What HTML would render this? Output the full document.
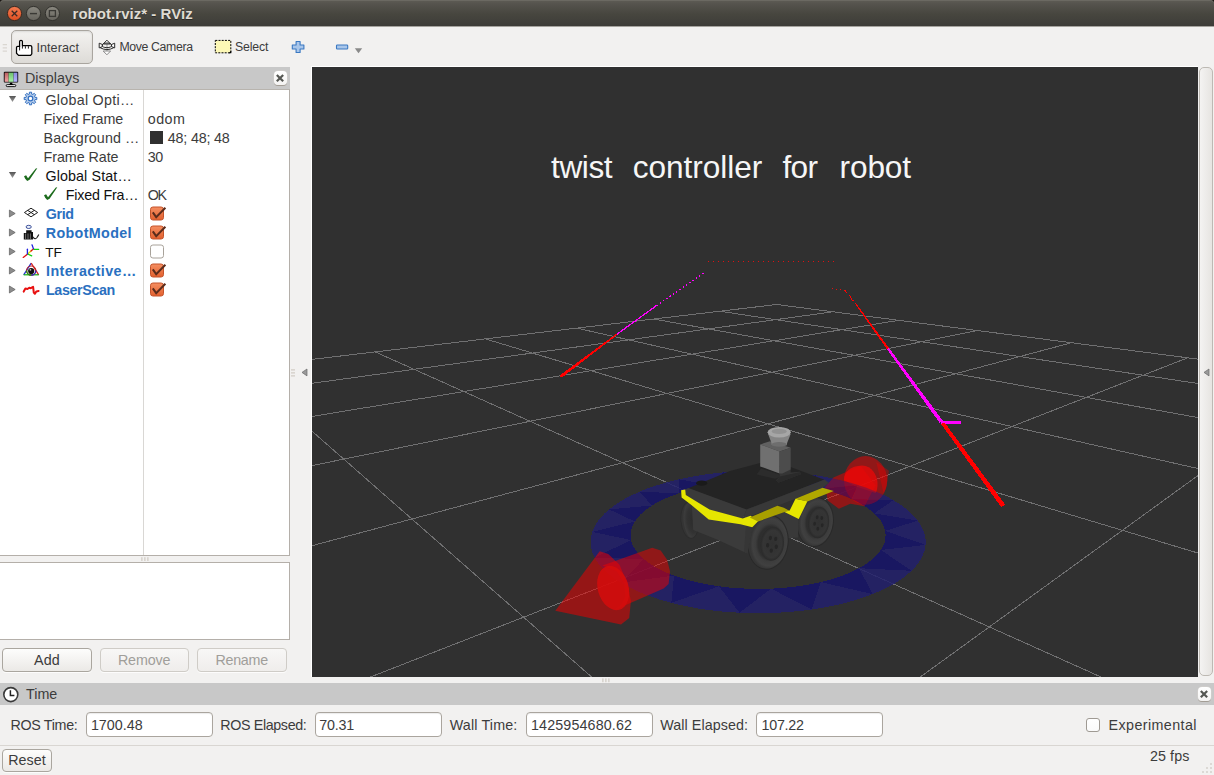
<!DOCTYPE html>
<html>
<head>
<meta charset="utf-8">
<title>robot.rviz* - RViz</title>
<style>
html,body{margin:0;padding:0;}
body{width:1214px;height:775px;overflow:hidden;background:#f2f1f0;position:relative;
  font-family:"Liberation Sans","DejaVu Sans",sans-serif;font-size:14px;color:#3c3c3c;}
.abs{position:absolute;}
#titlebar{left:0;top:0;width:1214px;height:26px;border-radius:4px 4px 0 0;
  background:linear-gradient(#5e5c55 0px,#55534d 4px,#47463f 14px,#3d3c38 26px);box-shadow:inset 0 1px 0 #6b6962;}
.hdr{background:#c8c8c8;}
.closebtn{width:13px;height:14px;background:linear-gradient(#ffffff,#f4f3f2);border-radius:4px;box-shadow:0 1px 0 #a39d95, 0 0 0 0.5px #d5d2ce;}
.panel{background:#fff;border:1px solid #b4afa9;box-sizing:border-box;}
.btn{box-sizing:border-box;border:1px solid #aaa69f;border-radius:4px;background:linear-gradient(#fdfdfc,#ebe9e6);height:24px;box-shadow:0 1px 0 rgba(255,255,255,.8);}
.btn.dis{border-color:#cfccc7;background:linear-gradient(#f8f7f6,#efedeb);}
.inp{box-sizing:border-box;border:1px solid #aaa59e;border-radius:4px;background:#fff;height:25px;box-shadow:inset 0 1px 1px rgba(0,0,0,.08);}
</style>
</head>
<body>
<!-- TITLE BAR -->
<div class="abs" style="left:0;top:0;width:1214px;height:8px;background:#1a1614;"></div>
<div id="titlebar" class="abs"></div>
<div class="abs" style="left:0;top:26px;width:1214px;height:1px;background:#a5a39e;"></div>

<!-- TOOLBAR -->
<div class="abs" style="left:11px;top:30px;width:82px;height:34px;box-sizing:border-box;border:1px solid #a9a59f;border-radius:5px;background:linear-gradient(#f3f2f0,#e9e7e4 50%,#dddbd7);box-shadow:inset 0 1px 2px rgba(0,0,0,.10);"></div>

<!-- DISPLAYS PANEL -->
<div class="abs hdr" style="left:0;top:67px;width:290px;height:23px;"></div>
<div class="abs closebtn" style="left:273.5px;top:71px;"></div>
<div class="abs panel" style="left:-1px;top:89px;width:291px;height:467px;border-top-color:#b8b4ae;"></div>
<div class="abs" style="left:143px;top:90px;width:1px;height:465px;background:#d9d7d4;"></div>
<div class="abs panel" style="left:-1px;top:562px;width:291px;height:78px;"></div>

<div class="abs btn" style="left:2px;top:648px;width:90px;"></div>
<div class="abs btn dis" style="left:100px;top:648px;width:89px;"></div>
<div class="abs btn dis" style="left:197px;top:648px;width:90px;"></div>

<!-- 3D VIEW -->
<div class="abs" style="left:311px;top:66px;width:887px;height:1px;background:#fff;"></div>
<div class="abs" style="left:311px;top:66px;width:1px;height:611px;background:#fff;"></div>
<div class="abs" id="view" style="left:312px;top:67px;width:886px;height:610px;background:#303030;overflow:hidden;">
<svg class="abs" style="left:0;top:0" width="886" height="610" viewBox="312 67 886 610">
<g stroke="#707071" stroke-width="1" fill="none" shape-rendering="crispEdges">
<line x1="776.7" y1="304.5" x2="-867.1" y2="498.6"/>
<line x1="776.7" y1="304.5" x2="2713.4" y2="555.7"/>
<line x1="833.0" y1="311.8" x2="-1138.6" y2="582.4"/>
<line x1="719.7" y1="311.2" x2="3100.0" y2="671.1"/>
<line x1="898.9" y1="320.3" x2="-1634.4" y2="735.3"/>
<line x1="653.8" y1="319.0" x2="3877.0" y2="903.0"/>
<line x1="977.1" y1="330.5" x2="-2826.9" y2="1103.1"/>
<line x1="576.7" y1="328.1" x2="6239.8" y2="1608.3"/>
<line x1="1071.6" y1="342.7" x2="-9656.9" y2="3209.8"/>
<line x1="485.3" y1="338.9" x2="9816.4" y2="3142.7"/>
<line x1="1187.7" y1="357.8" x2="-6143.3" y2="3221.1"/>
<line x1="375.2" y1="351.9" x2="6592.9" y2="3136.6"/>
<line x1="1334.1" y1="376.8" x2="-2602.7" y2="3232.6"/>
<line x1="240.0" y1="367.9" x2="3382.9" y2="3130.6"/>
<line x1="1524.2" y1="401.4" x2="965.4" y2="3244.1"/>
<line x1="70.1" y1="387.9" x2="186.4" y2="3124.7"/>
<line x1="1781.2" y1="434.8" x2="4561.1" y2="3255.7"/>
<line x1="-150.1" y1="413.9" x2="-3183.3" y2="3295.9"/>
<line x1="2147.9" y1="482.3" x2="8185.0" y2="3267.4"/>
<line x1="-446.5" y1="448.9" x2="-6545.5" y2="3289.2"/>
<line x1="2713.4" y1="555.7" x2="11837.2" y2="3279.2"/>
<line x1="-867.1" y1="498.6" x2="-9892.8" y2="3282.6"/>
</g>
<g id="ring" shape-rendering="crispEdges"><polygon points="872.6,594.1 862.0,598.0 850.5,601.5 838.3,604.6 825.3,607.3 811.8,609.5 820.8,582.1" fill="#22206c" fill-opacity="0.85"/>
<polygon points="820.8,582.1 811.6,584.1 801.9,585.7 791.9,587.1 781.6,588.0 771.1,588.7 811.8,609.5" fill="#15136a" fill-opacity="0.85"/>
<polygon points="811.8,609.5 797.8,611.2 783.4,612.4 768.8,613.1 754.2,613.2 739.5,612.7 771.1,588.7" fill="#22206c" fill-opacity="0.85"/>
<polygon points="771.1,588.7 760.5,588.9 750.0,588.8 739.4,588.3 729.1,587.5 718.9,586.3 739.5,612.7" fill="#15136a" fill-opacity="0.85"/>
<polygon points="739.5,612.7 725.0,611.8 710.9,610.3 697.1,608.3 683.9,605.8 671.3,602.8 718.9,586.3" fill="#22206c" fill-opacity="0.85"/>
<polygon points="718.9,586.3 709.1,584.8 699.6,582.9 690.6,580.8 682.0,578.3 674.1,575.6 671.3,602.8" fill="#15136a" fill-opacity="0.85"/>
<polygon points="671.3,602.8 659.5,599.5 648.4,595.7 638.3,591.7 629.1,587.3 620.8,582.7 674.1,575.6" fill="#22206c" fill-opacity="0.85"/>
<polygon points="674.1,575.6 666.7,572.6 660.0,569.5 653.9,566.2 648.5,562.7 643.8,559.1 620.8,582.7" fill="#15136a" fill-opacity="0.85"/>
<polygon points="620.8,582.7 613.5,577.9 607.3,572.9 602.1,567.8 597.8,562.7 594.6,557.5 643.8,559.1" fill="#22206c" fill-opacity="0.85"/>
<polygon points="643.8,559.1 639.9,555.4 636.6,551.6 634.1,547.7 632.2,543.9 631.1,540.1 594.6,557.5" fill="#15136a" fill-opacity="0.85"/>
<polygon points="594.6,557.5 592.3,552.2 591.0,547.1 590.6,541.9 591.0,536.9 592.2,531.9 631.1,540.1" fill="#22206c" fill-opacity="0.85"/>
<polygon points="631.1,540.1 630.6,536.2 630.7,532.4 631.5,528.7 632.9,525.1 634.8,521.5 592.2,531.9" fill="#15136a" fill-opacity="0.85"/>
<polygon points="592.2,531.9 594.2,527.1 597.0,522.4 600.4,517.9 604.4,513.6 609.1,509.4 634.8,521.5" fill="#22206c" fill-opacity="0.85"/>
<polygon points="634.8,521.5 637.3,518.1 640.3,514.7 643.8,511.5 647.7,508.5 652.0,505.5 609.1,509.4" fill="#15136a" fill-opacity="0.85"/>
<polygon points="609.1,509.4 614.3,505.5 619.9,501.7 626.1,498.1 632.7,494.8 639.6,491.7 652.0,505.5" fill="#22206c" fill-opacity="0.85"/>
<polygon points="652.0,505.5 656.7,502.8 661.8,500.1 667.2,497.7 673.0,495.4 679.0,493.3 639.6,491.7" fill="#15136a" fill-opacity="0.85"/>
<polygon points="639.6,491.7 646.9,488.7 654.6,486.0 662.5,483.6 670.6,481.3 679.0,479.3 679.0,493.3" fill="#22206c" fill-opacity="0.85"/>
<polygon points="679.0,493.3 685.2,491.3 691.7,489.6 698.4,488.0 705.2,486.6 712.2,485.3 679.0,479.3" fill="#15136a" fill-opacity="0.85"/>
<polygon points="679.0,479.3 687.6,477.5 696.4,475.9 705.3,474.5 714.3,473.4 723.4,472.4 712.2,485.3" fill="#22206c" fill-opacity="0.85"/>
<polygon points="712.2,485.3 719.4,484.3 726.6,483.4 734.0,482.7 741.4,482.2 748.8,481.9 723.4,472.4" fill="#15136a" fill-opacity="0.85"/>
<polygon points="723.4,472.4 732.6,471.7 741.9,471.2 751.2,471.0 760.5,470.9 769.8,471.1 748.8,481.9" fill="#22206c" fill-opacity="0.85"/>
<polygon points="748.8,481.9 756.3,481.8 763.8,481.9 771.2,482.1 778.7,482.5 786.0,483.1 769.8,471.1" fill="#15136a" fill-opacity="0.85"/>
<polygon points="769.8,471.1 779.1,471.5 788.3,472.1 797.5,473.0 806.6,474.0 815.6,475.3 786.0,483.1" fill="#22206c" fill-opacity="0.85"/>
<polygon points="786.0,483.1 793.3,483.9 800.5,484.9 807.6,486.0 814.5,487.4 821.3,488.9 815.6,475.3" fill="#15136a" fill-opacity="0.85"/>
<polygon points="815.6,475.3 824.4,476.8 833.1,478.5 841.6,480.5 849.9,482.6 857.9,485.0 821.3,488.9" fill="#22206c" fill-opacity="0.85"/>
<polygon points="821.3,488.9 827.9,490.6 834.3,492.5 840.4,494.5 846.2,496.7 851.8,499.1 857.9,485.0" fill="#15136a" fill-opacity="0.85"/>
<polygon points="857.9,485.0 865.7,487.6 873.1,490.4 880.3,493.5 887.1,496.7 893.4,500.2 851.8,499.1" fill="#22206c" fill-opacity="0.85"/>
<polygon points="851.8,499.1 857.1,501.7 862.0,504.4 866.5,507.3 870.6,510.3 874.3,513.4 893.4,500.2" fill="#15136a" fill-opacity="0.85"/>
<polygon points="893.4,500.2 899.3,503.9 904.8,507.8 909.7,511.9 914.0,516.1 917.8,520.6 874.3,513.4" fill="#22206c" fill-opacity="0.85"/>
<polygon points="874.3,513.4 877.5,516.7 880.3,520.1 882.5,523.6 884.1,527.2 885.2,530.9 917.8,520.6" fill="#15136a" fill-opacity="0.85"/>
<polygon points="917.8,520.6 920.8,525.2 923.2,529.9 924.8,534.8 925.6,539.8 925.6,544.9 885.2,530.9" fill="#22206c" fill-opacity="0.85"/>
<polygon points="885.2,530.9 885.6,534.7 885.4,538.5 884.6,542.3 883.1,546.2 880.9,550.0 925.6,544.9" fill="#15136a" fill-opacity="0.85"/>
<polygon points="925.6,544.9 924.7,550.1 922.8,555.3 920.1,560.5 916.3,565.7 911.5,570.8 880.9,550.0" fill="#22206c" fill-opacity="0.85"/>
<polygon points="880.9,550.0 877.9,553.8 874.3,557.6 869.9,561.2 864.9,564.8 859.1,568.2 911.5,570.8" fill="#15136a" fill-opacity="0.85"/>
<polygon points="911.5,570.8 905.8,575.9 899.0,580.8 891.2,585.5 882.4,589.9 872.6,594.1 859.1,568.2" fill="#22206c" fill-opacity="0.85"/>
<polygon points="859.1,568.2 852.7,571.4 845.6,574.4 837.9,577.2 829.6,579.8 820.8,582.1 872.6,594.1" fill="#15136a" fill-opacity="0.85"/></g>
<g id="arrow2">
<ellipse cx="865.6" cy="480.3" rx="21.6" ry="24.2" fill="#f00000" fill-opacity="0.5"/>
<polygon points="876.3,461.9 888.9,470.7 886.4,487.0 883.8,493.7" fill="#f00000" fill-opacity="0.35"/>
<polygon points="833.5,477.5 860.4,465.7 875.5,485.3 864.6,506.3 850.3,503.8 838.9,508.8 827.7,500.4 825.2,487.0" fill="#f00000" fill-opacity="0.5"/>
<path d="M843.9,480.3 C843.9,471.9 850.3,466.0 862.0,465.5 C872.1,466.0 877.5,475.3 877.5,483.7 C877.5,488.7 876.8,491.2 875.5,492.9 L855.3,486.2 Z" fill="#e60a0a" fill-opacity="0.8"/>
</g>
<clipPath id="a2clip"><ellipse cx="865.6" cy="480.3" rx="21.6" ry="24.2"/><polygon points="833.5,477.5 860.4,465.7 875.5,485.3 864.6,506.3 850.3,503.8 838.9,508.8 827.7,500.4 825.2,487"/></clipPath>
<g clip-path="url(#a2clip)" opacity="0.42"><polygon points="872.6,594.1 862.0,598.0 850.5,601.5 838.3,604.6 825.3,607.3 811.8,609.5 820.8,582.1" fill="#22206c" fill-opacity="0.85"/>
<polygon points="820.8,582.1 811.6,584.1 801.9,585.7 791.9,587.1 781.6,588.0 771.1,588.7 811.8,609.5" fill="#15136a" fill-opacity="0.85"/>
<polygon points="811.8,609.5 797.8,611.2 783.4,612.4 768.8,613.1 754.2,613.2 739.5,612.7 771.1,588.7" fill="#22206c" fill-opacity="0.85"/>
<polygon points="771.1,588.7 760.5,588.9 750.0,588.8 739.4,588.3 729.1,587.5 718.9,586.3 739.5,612.7" fill="#15136a" fill-opacity="0.85"/>
<polygon points="739.5,612.7 725.0,611.8 710.9,610.3 697.1,608.3 683.9,605.8 671.3,602.8 718.9,586.3" fill="#22206c" fill-opacity="0.85"/>
<polygon points="718.9,586.3 709.1,584.8 699.6,582.9 690.6,580.8 682.0,578.3 674.1,575.6 671.3,602.8" fill="#15136a" fill-opacity="0.85"/>
<polygon points="671.3,602.8 659.5,599.5 648.4,595.7 638.3,591.7 629.1,587.3 620.8,582.7 674.1,575.6" fill="#22206c" fill-opacity="0.85"/>
<polygon points="674.1,575.6 666.7,572.6 660.0,569.5 653.9,566.2 648.5,562.7 643.8,559.1 620.8,582.7" fill="#15136a" fill-opacity="0.85"/>
<polygon points="620.8,582.7 613.5,577.9 607.3,572.9 602.1,567.8 597.8,562.7 594.6,557.5 643.8,559.1" fill="#22206c" fill-opacity="0.85"/>
<polygon points="643.8,559.1 639.9,555.4 636.6,551.6 634.1,547.7 632.2,543.9 631.1,540.1 594.6,557.5" fill="#15136a" fill-opacity="0.85"/>
<polygon points="594.6,557.5 592.3,552.2 591.0,547.1 590.6,541.9 591.0,536.9 592.2,531.9 631.1,540.1" fill="#22206c" fill-opacity="0.85"/>
<polygon points="631.1,540.1 630.6,536.2 630.7,532.4 631.5,528.7 632.9,525.1 634.8,521.5 592.2,531.9" fill="#15136a" fill-opacity="0.85"/>
<polygon points="592.2,531.9 594.2,527.1 597.0,522.4 600.4,517.9 604.4,513.6 609.1,509.4 634.8,521.5" fill="#22206c" fill-opacity="0.85"/>
<polygon points="634.8,521.5 637.3,518.1 640.3,514.7 643.8,511.5 647.7,508.5 652.0,505.5 609.1,509.4" fill="#15136a" fill-opacity="0.85"/>
<polygon points="609.1,509.4 614.3,505.5 619.9,501.7 626.1,498.1 632.7,494.8 639.6,491.7 652.0,505.5" fill="#22206c" fill-opacity="0.85"/>
<polygon points="652.0,505.5 656.7,502.8 661.8,500.1 667.2,497.7 673.0,495.4 679.0,493.3 639.6,491.7" fill="#15136a" fill-opacity="0.85"/>
<polygon points="639.6,491.7 646.9,488.7 654.6,486.0 662.5,483.6 670.6,481.3 679.0,479.3 679.0,493.3" fill="#22206c" fill-opacity="0.85"/>
<polygon points="679.0,493.3 685.2,491.3 691.7,489.6 698.4,488.0 705.2,486.6 712.2,485.3 679.0,479.3" fill="#15136a" fill-opacity="0.85"/>
<polygon points="679.0,479.3 687.6,477.5 696.4,475.9 705.3,474.5 714.3,473.4 723.4,472.4 712.2,485.3" fill="#22206c" fill-opacity="0.85"/>
<polygon points="712.2,485.3 719.4,484.3 726.6,483.4 734.0,482.7 741.4,482.2 748.8,481.9 723.4,472.4" fill="#15136a" fill-opacity="0.85"/>
<polygon points="723.4,472.4 732.6,471.7 741.9,471.2 751.2,471.0 760.5,470.9 769.8,471.1 748.8,481.9" fill="#22206c" fill-opacity="0.85"/>
<polygon points="748.8,481.9 756.3,481.8 763.8,481.9 771.2,482.1 778.7,482.5 786.0,483.1 769.8,471.1" fill="#15136a" fill-opacity="0.85"/>
<polygon points="769.8,471.1 779.1,471.5 788.3,472.1 797.5,473.0 806.6,474.0 815.6,475.3 786.0,483.1" fill="#22206c" fill-opacity="0.85"/>
<polygon points="786.0,483.1 793.3,483.9 800.5,484.9 807.6,486.0 814.5,487.4 821.3,488.9 815.6,475.3" fill="#15136a" fill-opacity="0.85"/>
<polygon points="815.6,475.3 824.4,476.8 833.1,478.5 841.6,480.5 849.9,482.6 857.9,485.0 821.3,488.9" fill="#22206c" fill-opacity="0.85"/>
<polygon points="821.3,488.9 827.9,490.6 834.3,492.5 840.4,494.5 846.2,496.7 851.8,499.1 857.9,485.0" fill="#15136a" fill-opacity="0.85"/>
<polygon points="857.9,485.0 865.7,487.6 873.1,490.4 880.3,493.5 887.1,496.7 893.4,500.2 851.8,499.1" fill="#22206c" fill-opacity="0.85"/>
<polygon points="851.8,499.1 857.1,501.7 862.0,504.4 866.5,507.3 870.6,510.3 874.3,513.4 893.4,500.2" fill="#15136a" fill-opacity="0.85"/>
<polygon points="893.4,500.2 899.3,503.9 904.8,507.8 909.7,511.9 914.0,516.1 917.8,520.6 874.3,513.4" fill="#22206c" fill-opacity="0.85"/>
<polygon points="874.3,513.4 877.5,516.7 880.3,520.1 882.5,523.6 884.1,527.2 885.2,530.9 917.8,520.6" fill="#15136a" fill-opacity="0.85"/>
<polygon points="917.8,520.6 920.8,525.2 923.2,529.9 924.8,534.8 925.6,539.8 925.6,544.9 885.2,530.9" fill="#22206c" fill-opacity="0.85"/>
<polygon points="885.2,530.9 885.6,534.7 885.4,538.5 884.6,542.3 883.1,546.2 880.9,550.0 925.6,544.9" fill="#15136a" fill-opacity="0.85"/>
<polygon points="925.6,544.9 924.7,550.1 922.8,555.3 920.1,560.5 916.3,565.7 911.5,570.8 880.9,550.0" fill="#22206c" fill-opacity="0.85"/>
<polygon points="880.9,550.0 877.9,553.8 874.3,557.6 869.9,561.2 864.9,564.8 859.1,568.2 911.5,570.8" fill="#15136a" fill-opacity="0.85"/>
<polygon points="911.5,570.8 905.8,575.9 899.0,580.8 891.2,585.5 882.4,589.9 872.6,594.1 859.1,568.2" fill="#22206c" fill-opacity="0.85"/>
<polygon points="859.1,568.2 852.7,571.4 845.6,574.4 837.9,577.2 829.6,579.8 820.8,582.1 872.6,594.1" fill="#15136a" fill-opacity="0.85"/></g>
<defs>
<radialGradient id="tire" cx="0.55" cy="0.5" r="0.5"><stop offset="0" stop-color="#2c2c2c"/><stop offset="0.6" stop-color="#2e2e2e"/><stop offset="0.72" stop-color="#3c3c3c"/><stop offset="0.88" stop-color="#404040"/><stop offset="1" stop-color="#353535"/></radialGradient>
<radialGradient id="tireL" cx="0.7" cy="0.5" r="0.6"><stop offset="0" stop-color="#2c2c2c"/><stop offset="0.6" stop-color="#323232"/><stop offset="0.9" stop-color="#3c3c3c"/><stop offset="1" stop-color="#343434"/></radialGradient>
<radialGradient id="hub" cx="0.5" cy="0.5" r="0.5"><stop offset="0" stop-color="#303030"/><stop offset="0.8" stop-color="#353535"/><stop offset="1" stop-color="#2a2a2a"/></radialGradient>
</defs>
<g id="robot">
<ellipse cx="689.8" cy="520.4" rx="9.2" ry="18.2" fill="#2b2b2b" transform="rotate(-5 689.8 520.4)" />
<ellipse cx="689.8" cy="520.4" rx="8.4" ry="17.4" fill="url(#tireL)" transform="rotate(-5 689.8 520.4)" />
<ellipse cx="815.2" cy="521.9" rx="18.6" ry="25.2" fill="#292929" transform="rotate(7 815.2 521.9)" />
<ellipse cx="815.2" cy="521.9" rx="17.6" ry="24.2" fill="url(#tire)" transform="rotate(7 815.2 521.9)" />
<ellipse cx="818.7" cy="522.6" rx="10.3" ry="15.6" fill="url(#hub)" transform="rotate(7 818.7 522.6)" />
<g transform="rotate(7 818.7 522.6)"><ellipse cx="822.5" cy="524.7" rx="1.4" ry="2.0" fill="#262626"/><ellipse cx="818.6" cy="528.8" rx="1.4" ry="2.0" fill="#262626"/><ellipse cx="814.8" cy="524.3" rx="1.4" ry="2.0" fill="#262626"/><ellipse cx="816.5" cy="517.4" rx="1.4" ry="2.0" fill="#262626"/><ellipse cx="821.2" cy="517.7" rx="1.4" ry="2.0" fill="#262626"/></g>
<polygon points="758.1,521.3 784.5,511.7 798.1,505.8 798.1,537.4 788.8,538.1 772.3,534.2" fill="#393939" />
<ellipse cx="768.0" cy="542.2" rx="20.6" ry="27.6" fill="#292929" transform="rotate(7 768.0 542.2)" />
<ellipse cx="768.0" cy="542.2" rx="19.6" ry="26.6" fill="url(#tire)" transform="rotate(7 768.0 542.2)" />
<ellipse cx="772.3" cy="543.9" rx="11.6" ry="17.0" fill="url(#hub)" transform="rotate(7 772.3 543.9)" />
<g transform="rotate(7 772.3 543.9)"><ellipse cx="776.6" cy="546.2" rx="1.6" ry="2.2" fill="#262626"/><ellipse cx="772.1" cy="550.7" rx="1.6" ry="2.2" fill="#262626"/><ellipse cx="767.8" cy="545.8" rx="1.6" ry="2.2" fill="#262626"/><ellipse cx="769.7" cy="538.2" rx="1.6" ry="2.2" fill="#262626"/><ellipse cx="775.1" cy="538.5" rx="1.6" ry="2.2" fill="#262626"/></g>
<polygon points="691.7,504.1 708.7,518.8 740.5,523.5 752.1,526.6 747.4,553.4 716.5,539.3 693.2,530.0" fill="#3b3b3b" />
<polygon points="745.9,525.8 752.1,526.6 747.4,553.4 744.0,551.7" fill="#363636" />
<polygon points="688.3,488.2 730.0,471.1 761.0,462.7 791.2,467.3 824.5,479.7 745.5,509.8 746.6,509.9" fill="#242424" />
<polygon points="684.7,489.7 688.3,487.9 746.6,509.6 742.8,518.8 709.5,509.9 685.5,495.3" fill="#3a3a3a" />
<polygon points="746.6,509.6 824.5,479.6 829.1,483.1 822.6,487.7 795.5,498.7 777.4,505.8 750.5,516.1 742.8,518.8" fill="#383838" />
<polygon points="681.1,490.2 685.2,489.4 685.8,495.0 709.5,509.6 742.8,518.5 750.5,515.7 758.1,521.3 752.3,527.2 740.5,524.3 708.7,519.6 691.7,505.2 681.6,497.5" fill="#e6e600" />
<polygon points="749.7,517.4 777.4,505.8 783.9,507.7 789.7,511.0 784.5,512.0 758.1,521.5" fill="#a8a000" />
<polygon points="784.5,511.9 789.7,510.5 795.5,498.7 807.4,501.3 798.7,519.0" fill="#e6e600" />
<polygon points="795.5,498.7 822.6,487.7 833.8,491.1 807.4,501.4" fill="#b0a800" />
<ellipse cx="701.7" cy="483.2" rx="5.5" ry="2.6" fill="#1a1a1a" />
<polygon points="756.6,474.6 761.0,468.4 779.6,474.6 779.6,476.9 775.2,478.8" fill="#2c2c2c" />
<polygon points="779.6,473.5 790.7,469.2 790.7,472.6 800.0,471.7 800.8,474.3 778.3,482.8 776.1,480.3 779.6,476.6" fill="#353535" />
<polygon points="779.9,476.6 800.0,472.0 800.8,474.3 778.3,482.8 776.5,480.7" fill="#2a2a2a" />
<polygon points="760.2,444.4 770.0,441.3 790.7,447.8 779.6,451.5" fill="#606060" />
<polygon points="760.2,444.4 779.6,451.5 779.6,473.5 760.2,466.4" fill="#707070" />
<polygon points="779.6,451.5 790.7,447.8 790.7,469.5 782.3,473.5 779.6,473.5" fill="#4c4c4c" />
<polygon points="768.1,433.9 790.7,433.9 787.3,442.6 786.7,445.3 771.8,445.0 771.2,442.3" fill="#858585" />
<ellipse cx="779.2" cy="444.4" rx="7.6" ry="2.4" fill="#6e6e6e" />
<ellipse cx="779.2" cy="432.3" rx="11.6" ry="5.2" fill="#a6a6a6" />
<ellipse cx="779.2" cy="431.4" rx="7.5" ry="2.6" fill="#929292" />
</g>
<g id="arrow1">
<polygon points="602.5,565.5 652.2,547.8 660.7,550.6 667.1,559.8 670.0,571.2 668.6,584.0 663.6,588.5 613.9,610.3 621.0,605.3 625.2,596.8 624.5,584.0 616.7,571.2" fill="#f00000" fill-opacity="0.5"/>
<polygon points="555.3,610.7 599.7,551.3 608.2,553.9 619.5,564.8 627.4,584.0 630.9,601.0 629.2,618.1 621.0,624.5" fill="#f00000" fill-opacity="0.53"/>
<ellipse cx="613.2" cy="588.0" rx="15.4" ry="22.6" fill="#d40c0c" transform="rotate(-16 613.2 588.0)" fill-opacity="0.88"/>
</g>
<g font-family="'Liberation Sans',sans-serif" font-size="31.6" fill="#f6f6f6">
<text x="551.0" y="178.3" textLength="61.6" lengthAdjust="spacing">twist</text>
<text x="632.8" y="178.3" textLength="129.6" lengthAdjust="spacing">controller</text>
<text x="782.4" y="178.3" textLength="35.6" lengthAdjust="spacing">for</text>
<text x="839.6" y="178.3" textLength="71.4" lengthAdjust="spacing">robot</text>
</g>
<g shape-rendering="crispEdges" fill="none">
<polygon points="559,376 562,377.5 617.6,334.6 616.6,333.6" fill="#ff0000"/>
<line x1="617.1" y1="334.1" x2="656.3" y2="305.7" stroke="#ff00ff" stroke-width="1.3"/>
<line x1="656.3" y1="305.7" x2="705.6" y2="271.8" stroke="#ff00ff" stroke-width="1.2" stroke-dasharray="1.5 2.5"/>
<line x1="708" y1="261.5" x2="835" y2="261.5" stroke="#e01010" stroke-width="1" stroke-dasharray="1 4"/>
<line x1="832" y1="288.6" x2="846" y2="290.6" stroke="#e01010" stroke-width="1" stroke-dasharray="1 3"/>
<line x1="845.2" y1="290.5" x2="856" y2="304.5" stroke="#ff0000" stroke-width="1.2" stroke-dasharray="1 1"/>
<polygon points="855.5,304.5 856.5,304 889,348 886.8,349" fill="#ff0000"/>
<polygon points="886.8,349 889,348 943,421 939.6,422.8" fill="#ff00ff"/>
<rect x="941" y="420.8" width="19.5" height="2.8" fill="#ff00ff"/>
<polygon points="941,424 944.6,422.5 1005.2,504.6 1001.2,507" fill="#ff0000"/>
</g>
</svg>
</div>
<!-- collapsed right panel handle -->
<div class="abs" style="left:1199px;top:67px;width:14px;height:609px;box-sizing:border-box;border:1px solid #bdb9b3;border-radius:5px;background:linear-gradient(90deg,#f4f3f2,#e6e4e1);"></div>

<!-- TIME PANEL -->
<div class="abs hdr" style="left:0;top:683px;width:1214px;height:22px;"></div>
<div class="abs closebtn" style="left:1197.5px;top:687px;"></div>

<div class="abs inp" style="left:86px;top:712px;width:127px;"></div>
<div class="abs inp" style="left:315px;top:712px;width:127px;"></div>
<div class="abs inp" style="left:526px;top:712px;width:127px;"></div>
<div class="abs inp" style="left:756px;top:712px;width:127px;"></div>
<div class="abs" style="left:1086px;top:718px;width:14px;height:14px;box-sizing:border-box;border:1px solid #9f9a93;border-radius:3px;background:linear-gradient(#fff,#fafafa);"></div>

<div class="abs" style="left:0;top:745px;width:1214px;height:1px;background:#d9d6d2;"></div>
<div class="abs btn" style="left:2px;top:749px;width:50px;height:23px;"></div>
<svg class="abs" style="left:0;top:0" width="1214" height="775" viewBox="0 0 1214 775" font-family="'Liberation Sans','DejaVu Sans',sans-serif">
<text x="72.5" y="19.9" textLength="120.2" lengthAdjust="spacing" font-size="15" font-weight="bold" fill="#2b2a27" >robot.rviz* - RViz</text>
<text x="72.5" y="18.9" textLength="120.2" lengthAdjust="spacing" font-size="15" font-weight="bold" fill="#dfdbd2" >robot.rviz* - RViz</text>
<text x="36.4" y="52.2" textLength="42.5" lengthAdjust="spacing" font-size="12.6" font-weight="normal" fill="#3c3c3c" >Interact</text>
<text x="119.4" y="50.7" textLength="73.6" lengthAdjust="spacing" font-size="12.3" font-weight="normal" fill="#3c3c3c" >Move Camera</text>
<text x="235.1" y="50.8" textLength="33.2" lengthAdjust="spacing" font-size="12.3" font-weight="normal" fill="#3c3c3c" >Select</text>
<text x="25.0" y="83.0" textLength="54.4" lengthAdjust="spacing" font-size="14.3" font-weight="normal" fill="#3c3c3c" >Displays</text>
<text x="45.4" y="104.5" textLength="88.8" lengthAdjust="spacing" font-size="14.3" font-weight="normal" fill="#3c3c3c" >Global Opti…</text>
<text x="43.6" y="123.5" textLength="79.7" lengthAdjust="spacing" font-size="14.3" font-weight="normal" fill="#3c3c3c" >Fixed Frame</text>
<text x="147.7" y="123.5" textLength="37.2" lengthAdjust="spacing" font-size="14.3" font-weight="normal" fill="#3c3c3c" >odom</text>
<text x="43.6" y="142.5" textLength="95.8" lengthAdjust="spacing" font-size="14.3" font-weight="normal" fill="#3c3c3c" >Background …</text>
<text x="167.8" y="142.5" textLength="61.9" lengthAdjust="spacing" font-size="14.3" font-weight="normal" fill="#3c3c3c" >48; 48; 48</text>
<text x="43.6" y="161.5" textLength="74.9" lengthAdjust="spacing" font-size="14.3" font-weight="normal" fill="#3c3c3c" >Frame Rate</text>
<text x="147.7" y="161.5" textLength="15.5" lengthAdjust="spacing" font-size="14.3" font-weight="normal" fill="#3c3c3c" >30</text>
<text x="45.4" y="180.5" textLength="86.3" lengthAdjust="spacing" font-size="14.3" font-weight="normal" fill="#111111" >Global Stat…</text>
<text x="65.8" y="199.5" textLength="72.7" lengthAdjust="spacing" font-size="14.3" font-weight="normal" fill="#111111" >Fixed Fra…</text>
<text x="147.7" y="199.5" textLength="19.4" lengthAdjust="spacing" font-size="14.3" font-weight="normal" fill="#3c3c3c" >OK</text>
<text x="45.7" y="218.5" textLength="28.3" lengthAdjust="spacing" font-size="14.3" font-weight="bold" fill="#2a70c0" >Grid</text>
<text x="45.7" y="237.5" textLength="85.9" lengthAdjust="spacing" font-size="14.3" font-weight="bold" fill="#2a70c0" >RobotModel</text>
<text x="45.2" y="256.5"  font-size="13.6" font-weight="normal" fill="#111111" >TF</text>
<text x="46.0" y="275.5" textLength="90.2" lengthAdjust="spacing" font-size="14.3" font-weight="bold" fill="#2a70c0" >Interactive…</text>
<text x="46.0" y="294.5" textLength="69.3" lengthAdjust="spacing" font-size="14.3" font-weight="bold" fill="#2a70c0" >LaserScan</text>
<text x="34.1" y="664.7" textLength="25.7" lengthAdjust="spacing" font-size="14.3" font-weight="normal" fill="#3c3c3c" >Add</text>
<text x="117.9" y="664.7" textLength="52.6" lengthAdjust="spacing" font-size="14.3" font-weight="normal" fill="#a09e9a" >Remove</text>
<text x="215.5" y="664.7" textLength="52.6" lengthAdjust="spacing" font-size="14.3" font-weight="normal" fill="#a09e9a" >Rename</text>
<text x="25.9" y="698.8" textLength="31.4" lengthAdjust="spacing" font-size="14.3" font-weight="normal" fill="#3c3c3c" >Time</text>
<text x="10.4" y="729.5" textLength="67.4" lengthAdjust="spacing" font-size="14.3" font-weight="normal" fill="#3c3c3c" >ROS Time:</text>
<text x="90.9" y="729.5" textLength="51.7" lengthAdjust="spacing" font-size="14.3" font-weight="normal" fill="#3c3c3c" >1700.48</text>
<text x="220.2" y="729.5" textLength="86.6" lengthAdjust="spacing" font-size="14.3" font-weight="normal" fill="#3c3c3c" >ROS Elapsed:</text>
<text x="319.2" y="729.5" textLength="35.0" lengthAdjust="spacing" font-size="14.3" font-weight="normal" fill="#3c3c3c" >70.31</text>
<text x="449.7" y="729.5" textLength="67.6" lengthAdjust="spacing" font-size="14.3" font-weight="normal" fill="#3c3c3c" >Wall Time:</text>
<text x="531.0" y="729.5" textLength="101.0" lengthAdjust="spacing" font-size="14.3" font-weight="normal" fill="#3c3c3c" >1425954680.62</text>
<text x="660.2" y="729.5" textLength="87.7" lengthAdjust="spacing" font-size="14.3" font-weight="normal" fill="#3c3c3c" >Wall Elapsed:</text>
<text x="761.6" y="729.5" textLength="42.3" lengthAdjust="spacing" font-size="14.3" font-weight="normal" fill="#3c3c3c" >107.22</text>
<text x="1108.5" y="729.6" textLength="88.0" lengthAdjust="spacing" font-size="14.3" font-weight="normal" fill="#3c3c3c" >Experimental</text>
<text x="8.2" y="764.8" textLength="37.5" lengthAdjust="spacing" font-size="14.3" font-weight="normal" fill="#3c3c3c" >Reset</text>
<text x="1149.9" y="761.2" textLength="39.5" lengthAdjust="spacing" font-size="14.3" font-weight="normal" fill="#3c3c3c" >25 fps</text>
<defs>
<linearGradient id="gClose" x1="0" y1="0" x2="0" y2="1"><stop offset="0" stop-color="#f47b50"/><stop offset="1" stop-color="#df4f22"/></linearGradient>
<linearGradient id="gWin" x1="0" y1="0" x2="0" y2="1"><stop offset="0" stop-color="#8a8880"/><stop offset="1" stop-color="#66645d"/></linearGradient>
<linearGradient id="gChk" x1="0" y1="0" x2="0" y2="1"><stop offset="0" stop-color="#f58f62"/><stop offset="1" stop-color="#e2602e"/></linearGradient>
<linearGradient id="gArr" x1="0" y1="0" x2="0" y2="1"><stop offset="0" stop-color="#555"/><stop offset="1" stop-color="#9a9a9a"/></linearGradient>
<linearGradient id="gR" x1="0" y1="0" x2="0" y2="1"><stop offset="0" stop-color="#b96060"/><stop offset="1" stop-color="#f4a4a4"/></linearGradient>
<linearGradient id="gG" x1="0" y1="0" x2="0" y2="1"><stop offset="0" stop-color="#6cc06c"/><stop offset="1" stop-color="#a8f0a8"/></linearGradient>
<linearGradient id="gB" x1="0" y1="0" x2="0" y2="1"><stop offset="0" stop-color="#8a8ae0"/><stop offset="1" stop-color="#b4b4ff"/></linearGradient>
</defs>
<circle cx="14.5" cy="13.5" r="7.1" fill="url(#gClose)" stroke="#3a2a22" stroke-width="1"/>
<path d="M11.7,10.7 L17.3,16.3 M17.3,10.7 L11.7,16.3" stroke="#3c2a24" stroke-width="1.25" fill="none"/>
<circle cx="33.5" cy="13.5" r="7.1" fill="url(#gWin)" stroke="#32312d" stroke-width="1"/>
<path d="M30,13.6 H37" stroke="#3a3935" stroke-width="1.4"/>
<circle cx="52.4" cy="13.5" r="7.1" fill="url(#gWin)" stroke="#32312d" stroke-width="1"/>
<rect x="49.4" y="10.6" width="6" height="5.8" fill="none" stroke="#3a3935" stroke-width="1.3"/>
<rect x="2.7" y="44.2" width="4.3" height="1" fill="#d4d0ca"/>
<rect x="2.7" y="47.4" width="4.3" height="1" fill="#d4d0ca"/>
<rect x="2.7" y="50.6" width="4.3" height="1" fill="#d4d0ca"/>
<path d="M19.6,41.6 Q19.6,40.3 21,40.3 Q22.4,40.3 22.4,41.6 V45.5 H30.4 Q31.8,45.5 31.8,47 V53.8 L30.6,55.4 H18.6 L16.5,53.3 V47.6 Q16.5,46.4 17.8,46.4 H19.6 Z" fill="#fff" stroke="#000" stroke-width="1.25" stroke-linejoin="round"/>
<path d="M22.4,45.5 V48.6 M25.4,46.2 V48.6 M28.4,46.2 V48.6 M19.6,46.4 V50.4" stroke="#000" stroke-width="0.9" fill="none"/>
<g stroke="#2a2a2a" stroke-width="1" fill="#fff" stroke-linejoin="round">
<rect x="106" y="43.5" width="1.9" height="8" fill="#c4c4c4" stroke="none"/>
<path d="M106.9,40.2 L110.6,44 H103.2 Z"/>
<path d="M106.9,54.8 L110.6,51 H103.2 Z" stroke="#8a8a8a"/>
<path d="M99.2,43.2 V47.9 L102.4,46.6 V44.5 Z"/>
<path d="M114.7,43.2 V47.9 L111.5,46.6 V44.5 Z"/>
<ellipse cx="106.9" cy="45.3" rx="4.6" ry="2.3" fill="none"/>
<path d="M100,47.6 Q106.9,51.6 113.9,47.6" fill="none"/>
</g>
<rect x="215.3" y="40.4" width="15.5" height="12.4" fill="#fdf8b6" stroke="#000" stroke-width="1" stroke-dasharray="2 1.2"/>
<path d="M231.3,50.6 V53.3 H228.6 Z" fill="#000"/>
<path d="M296.1,41.5 H300.1 V45 H303.9 V49 H300.1 V52.5 H296.1 V49 H292.3 V45 H296.1 Z" fill="#a9c6ea" stroke="#3a78c2" stroke-width="1.1" stroke-linejoin="round"/>
<rect x="336.5" y="45" width="11.2" height="4" rx="0.8" fill="#a9c6ea" stroke="#3a78c2" stroke-width="1.1"/>
<path d="M354.8,48.2 H362.2 L358.5,53.2 Z" fill="#8a8a8a"/>
<rect x="6.2" y="84.6" width="9.6" height="2" rx="1" fill="#f0f0f0" stroke="#000" stroke-width="0.9"/>
<path d="M9.2,85 L10.2,82.8 H12 L13,85 Z" fill="#000"/>
<rect x="3.8" y="71.8" width="14.4" height="10.8" rx="1" fill="#000"/>
<rect x="4.6" y="72.6" width="4" height="9.2" fill="url(#gR)"/><rect x="8.6" y="72.6" width="5" height="9.2" fill="url(#gG)"/><rect x="13.6" y="72.6" width="3.8" height="9.2" fill="url(#gB)"/>
<path d="M277.6,75.7 l4.8,4.8 m0,-4.8 l-4.8,4.8" stroke="#555753" stroke-width="2.2" stroke-linecap="square" fill="none"/>
<path d="M1201.6,691.7 l4.8,4.8 m0,-4.8 l-4.8,4.8" stroke="#555753" stroke-width="2.2" stroke-linecap="square" fill="none"/>
<path d="M8.9,96.0 H16.1 L12.5,102.0 Z" fill="url(#gArr)"/>
<path d="M8.9,172.0 H16.1 L12.5,178.0 Z" fill="url(#gArr)"/>
<path d="M9.4,210.0 V217.0 L15.2,213.5 Z" fill="#8c8c8c" stroke="#5e5e5e" stroke-width="0.7"/>
<path d="M9.4,229.0 V236.0 L15.2,232.5 Z" fill="#8c8c8c" stroke="#5e5e5e" stroke-width="0.7"/>
<path d="M9.4,248.0 V255.0 L15.2,251.5 Z" fill="#8c8c8c" stroke="#5e5e5e" stroke-width="0.7"/>
<path d="M9.4,267.0 V274.0 L15.2,270.5 Z" fill="#8c8c8c" stroke="#5e5e5e" stroke-width="0.7"/>
<path d="M9.4,286.0 V293.0 L15.2,289.5 Z" fill="#8c8c8c" stroke="#5e5e5e" stroke-width="0.7"/>
<polygon points="34.9,97.3 36.8,97.4 36.8,99.6 34.9,99.7 34.5,100.8 35.7,102.2 34.2,103.7 32.8,102.5 31.7,102.9 31.6,104.8 29.4,104.8 29.3,102.9 28.2,102.5 26.8,103.7 25.3,102.2 26.5,100.8 26.1,99.7 24.2,99.6 24.2,97.4 26.1,97.3 26.5,96.2 25.3,94.8 26.8,93.3 28.2,94.5 29.3,94.1 29.4,92.2 31.6,92.2 31.7,94.1 32.8,94.5 34.2,93.3 35.7,94.8 34.5,96.2" fill="#b7cdea" stroke="#2f6dc0" stroke-width="1" stroke-linejoin="round"/>
<circle cx="30.5" cy="98.5" r="2.3" fill="#fff" stroke="#2f6dc0" stroke-width="1.2"/>
<polygon points="24.0,176.3 26.1,175.2 28.0,178.3 35.8,168.6 37.3,168.2 29.6,179.8 27.2,181.0 25.2,178.7" fill="#1c6b1c"/>
<polygon points="44.0,195.3 46.1,194.2 48.0,197.3 55.8,187.6 57.3,187.2 49.6,198.8 47.2,200.0 45.2,197.7" fill="#1c6b1c"/>
<g stroke="#222" stroke-width="1" fill="none"><path d="M24.4,212.5 L31,208.2 L37.7,212.5 L31,216.8 Z"/><path d="M27.7,210.35 L34.35,214.65 M34.35,210.35 L27.7,214.65"/></g>
<ellipse cx="28.7" cy="226.9" rx="2.6" ry="1.6" fill="#e8eef8" stroke="#2a3f90" stroke-width="0.9"/>
<path d="M26.2,230.2 H31.6 V232 H33 V239.6 H23.8 V233 H26.2 Z" fill="#111"/>
<path d="M25.6,233.5 V239 M28,233.5 V239 M30.4,233.5 V239" stroke="#999" stroke-width="0.7"/>
<path d="M32.8,236.8 Q35.2,240 36.8,237.8 Q38,236 38.8,234.4" stroke="#222" stroke-width="1.1" fill="none"/>
<g stroke-width="1.3" fill="none" stroke-linecap="round">
<path d="M23.2,257.4 L27.7,254" stroke="#e01010"/><path d="M27.7,254 L31,251" stroke="#e8e000"/><path d="M31,251 L33.6,248.8" stroke="#e01010"/>
<path d="M27.7,254 L31.7,255.8" stroke="#10d010"/><path d="M34,249.3 L38.7,249.3" stroke="#10d010"/>
<path d="M27.4,249.2 V254" stroke="#2020e0"/><path d="M32,244.8 L33.4,248.6" stroke="#2020e0"/>
</g>
<g stroke-width="1.2" fill="none">
<path d="M31.2,263.2 L23.7,274.8" stroke="#2030d0"/><path d="M31.2,263.2 L38.7,274.8" stroke="#d02020"/><path d="M23.7,274.8 H38.7" stroke="#10b010"/>
<circle cx="31.2" cy="270.6" r="4.6" stroke="#c02020"/>
<path d="M26.6,270.6 A4.6,4.6 0 0 0 31.2,275.2" stroke="#10a010"/><path d="M31.2,275.2 A4.6,4.6 0 0 0 35.8,270.6" stroke="#2030d0"/>
</g>
<circle cx="31.2" cy="271" r="3.1" fill="#111"/><circle cx="30.4" cy="269.8" r="0.9" fill="#bbb"/>
<path d="M23.7,291.6 L25.4,288.6 L27.4,289 L29.2,287.8 L30.8,288.2 L33.1,286.8 L33.8,292.6 L34.9,293.8 L36.3,291.4 L38.6,291" stroke="#e81010" stroke-width="2" fill="none" stroke-linejoin="round" stroke-linecap="round"/>
<rect x="150" y="131" width="13" height="13" fill="#303030"/>
<rect x="150.5" y="207.0" width="13" height="13" rx="2.4" fill="url(#gChk)" stroke="#c4532a" stroke-width="1"/>
<path d="M152.8,212.3 L156.2,217.1 L165.4,207.7" stroke="#5b2c1c" stroke-width="2" fill="none" stroke-linejoin="miter"/>
<rect x="150.5" y="226.0" width="13" height="13" rx="2.4" fill="url(#gChk)" stroke="#c4532a" stroke-width="1"/>
<path d="M152.8,231.3 L156.2,236.1 L165.4,226.7" stroke="#5b2c1c" stroke-width="2" fill="none" stroke-linejoin="miter"/>
<rect x="150.5" y="245.0" width="13" height="13" rx="2.4" fill="#fff" stroke="#a8a29a" stroke-width="1"/>
<rect x="150.5" y="264.0" width="13" height="13" rx="2.4" fill="url(#gChk)" stroke="#c4532a" stroke-width="1"/>
<path d="M152.8,269.3 L156.2,274.1 L165.4,264.7" stroke="#5b2c1c" stroke-width="2" fill="none" stroke-linejoin="miter"/>
<rect x="150.5" y="283.0" width="13" height="13" rx="2.4" fill="url(#gChk)" stroke="#c4532a" stroke-width="1"/>
<path d="M152.8,288.3 L156.2,293.1 L165.4,283.7" stroke="#5b2c1c" stroke-width="2" fill="none" stroke-linejoin="miter"/>
<circle cx="10.8" cy="694.6" r="7" fill="#fff" stroke="#3a3a3a" stroke-width="1.6"/>
<path d="M10.4,690.2 V695.4 H14.4" stroke="#222" stroke-width="1.5" fill="none"/>
<rect x="291" y="369.4" width="4" height="1" fill="#cbc4bc"/>
<rect x="291" y="372.4" width="4" height="1" fill="#cbc4bc"/>
<rect x="291" y="375.4" width="4" height="1" fill="#cbc4bc"/>
<path d="M302,372.4 L307,369 V375.9 Z" fill="#9a9a9a" stroke="#6a6a6a" stroke-width="0.7"/>
<path d="M1204,372.4 L1209,369 V375.9 Z" fill="#9a9a9a" stroke="#6a6a6a" stroke-width="0.7"/>
<rect x="141.4" y="557.2" width="1" height="3.8" fill="#c9c2ba"/>
<rect x="144.4" y="557.2" width="1" height="3.8" fill="#c9c2ba"/>
<rect x="147.4" y="557.2" width="1" height="3.8" fill="#c9c2ba"/>
<rect x="602.4" y="678.4" width="1" height="3.8" fill="#c9c2ba"/>
<rect x="605.4" y="678.4" width="1" height="3.8" fill="#c9c2ba"/>
<rect x="608.4" y="678.4" width="1" height="3.8" fill="#c9c2ba"/>
<rect x="1210" y="771" width="2" height="2" fill="#dcd9d5"/>
<rect x="1206" y="771" width="2" height="2" fill="#dcd9d5"/>
<rect x="1210" y="767" width="2" height="2" fill="#dcd9d5"/>
<rect x="1202" y="771" width="2" height="2" fill="#dcd9d5"/>
<rect x="1206" y="767" width="2" height="2" fill="#dcd9d5"/>
<rect x="1210" y="763" width="2" height="2" fill="#dcd9d5"/>
</svg>
</body>
</html>
